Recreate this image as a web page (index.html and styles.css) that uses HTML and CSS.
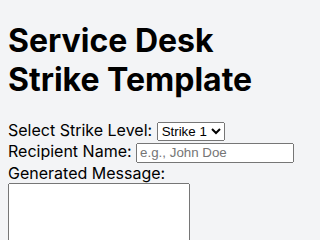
FILE: index.html
```html
<!DOCTYPE html>
<html lang="en">
<head>
  <meta charset="UTF-8" />
  <title>Service Desk Strike Template</title>
  <link rel="stylesheet" href="styles.css">
</head>
<body>
  <h1>Service Desk Strike Template</h1>

  <label for="strike-level">Select Strike Level:</label>
  <select id="strike-level">
    <option>Strike 1</option>
    <option>Strike 2</option>
    <option>Strike 3</option>
  </select>
  <br>
  <label for="recipient">Recipient Name:</label>
  <input type="text" id="recipient" placeholder="e.g., John Doe" />
  <br>
  <label for="message">Generated Message:</label>
  <br>
  <textarea id="message" rows="10" cols="20" readonly></textarea>
</body>
</html>
```

FILE: styles.css
```css
body {
  margin: 8px;
  font-family: Inter, 'Noto Sans', sans-serif;
  background-color: #f3f4f6;
  color: #000;
}

h1 {
  font-size: 32px;
  font-weight: 700;
  margin: 13px 0 21px;
}

select,
input {
  font-family: 'Liberation Sans', Arial, sans-serif;
}

input {
  width: 158px;
  height: 20px;
  box-sizing: border-box;
}
```
